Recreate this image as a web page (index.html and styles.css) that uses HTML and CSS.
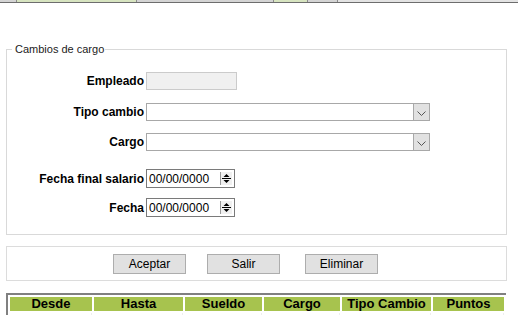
FILE: index.html
```html
<!DOCTYPE html>
<html lang="es">
<head>
    <meta charset="UTF-8">
    <title>Cambios de cargo</title>
    <link rel="stylesheet" href="styles.css">
</head>
<body>
    <div class="tabs">
        <span class="tab t1"></span>
        <span class="tab t2 on"></span>
        <span class="tab t3"></span>
        <span class="tab t4 on"></span>
        <span class="tab t5"></span>
        <span class="tab t6"></span>
    </div>

    <fieldset class="cambios">
        <legend>Cambios de cargo</legend>
        <div class="fila f-empleado">
            <label>Empleado</label>
            <div class="campo gris"></div>
        </div>
        <div class="fila f-tipo">
            <label>Tipo cambio</label>
            <div class="combo"><span class="flecha"><svg width="9" height="5" viewBox="0 0 9 5"><path d="M0.5 0.5 L4.5 4.5 L8.5 0.5" fill="none" stroke="#555" stroke-width="1"/></svg></span></div>
        </div>
        <div class="fila f-cargo">
            <label>Cargo</label>
            <div class="combo"><span class="flecha"><svg width="9" height="5" viewBox="0 0 9 5"><path d="M0.5 0.5 L4.5 4.5 L8.5 0.5" fill="none" stroke="#555" stroke-width="1"/></svg></span></div>
        </div>
        <div class="fila f-fecha1">
            <label>Fecha final salario</label>
            <div class="fecha">00/00/0000<span class="spin"><svg width="9" height="11" viewBox="0 0 9 11"><path d="M4.5 1 L7.5 4 L1.5 4 Z M1.5 7 L7.5 7 L4.5 10 Z" fill="#000"/><path d="M0 5.5 H9" stroke="#000" stroke-width="1"/></svg></span></div>
        </div>
        <div class="fila f-fecha2">
            <label>Fecha</label>
            <div class="fecha">00/00/0000<span class="spin"><svg width="9" height="11" viewBox="0 0 9 11"><path d="M4.5 1 L7.5 4 L1.5 4 Z M1.5 7 L7.5 7 L4.5 10 Z" fill="#000"/><path d="M0 5.5 H9" stroke="#000" stroke-width="1"/></svg></span></div>
        </div>
    </fieldset>

    <div class="botones">
        <button class="b-aceptar">Aceptar</button>
        <button class="b-salir">Salir</button>
        <button class="b-eliminar">Eliminar</button>
    </div>

    <table class="historial">
        <tr>
            <th class="c1">Desde</th>
            <th class="c2">Hasta</th>
            <th class="c3">Sueldo</th>
            <th class="c4">Cargo</th>
            <th class="c5">Tipo Cambio</th>
            <th class="c6 puntos">Puntos</th>
        </tr>
        <tr>
            <td></td><td></td><td></td><td></td><td></td><td></td>
        </tr>
    </table>
</body>
</html>
```

FILE: styles.css
```css
body {
    margin: 0;
    background-color: #fff;
    font-family: "Liberation Sans", Arial, sans-serif;
    font-size: 12px;
    color: #000;
}
.tabs {
    display: flex;
    height: 2px;
    border-bottom: 1px solid #6d6d6d;
}
.tab {
    height: 2px;
    background-color: #d4d4d4;
    border-right: 1px solid #8a8a8a;
}
.tab.on {
    background-color: #d7e4c0;
}
.t1 { width: 16px; }
.t2 { width: 119px; }
.t3 { width: 136px; }
.t4 { width: 33px; }
.t5 { width: 29px; }
.t6 { flex: 1; background-color: #e3e3e3; border-right: none; }

.cambios {
    margin: 40px 11px 0 6px;
    padding: 0 0 17px 0;
    border: 1px solid #d9d9d9;
    height: 192px;
    box-sizing: border-box;
}
.cambios legend {
    margin-left: 5px;
    padding: 0 1px 0 3px;
    font-size: 11px;
    color: #222;
}
.fila {
    display: flex;
    align-items: center;
}
.fila label {
    width: 137px;
    text-align: right;
    font-weight: bold;
    padding-right: 2px;
}
.f-empleado { margin-top: 17px; }
.f-tipo { margin-top: 13px; }
.f-cargo { margin-top: 12px; }
.f-fecha1 { margin-top: 18px; }
.f-fecha2 { margin-top: 10px; }

.campo {
    height: 17px;
    box-sizing: border-box;
}
.gris {
    width: 91px;
    height: 18px;
    background-color: #f0f0f0;
    border: 1px solid #cbcbcb;
}
.combo {
    width: 284px;
    height: 18px;
    box-sizing: border-box;
    border: 1px solid #a8a8a8;
    display: flex;
    justify-content: flex-end;
}
.flecha {
    width: 16px;
    height: 16px;
    box-sizing: border-box;
    background-color: #e1e1e1;
    border-left: 1px solid #a8a8a8;
    display: flex;
    align-items: center;
    justify-content: center;
    padding-top: 2px;
}
.fecha {
    width: 89px;
    height: 19px;
    box-sizing: border-box;
    border: 1px solid #7a7a7a;
    display: flex;
    align-items: center;
    padding-left: 2px;
    font-size: 12px;
}
.spin {
    margin-left: auto;
    margin-right: 2px;
    width: 11px;
    height: 13px;
    border-left: 1px solid #9a9a9a;
    background-color: #f0f0f0;
    display: flex;
    align-items: center;
    justify-content: center;
}

.botones {
    margin: 11px 11px 0 6px;
    height: 35px;
    box-sizing: border-box;
    border: 1px solid #dcdcdc;
    display: flex;
    align-items: center;
    padding-left: 106px;
}
button {
    width: 73px;
    height: 20px;
    font-family: "Liberation Sans", Arial, sans-serif;
    font-size: 12px;
    color: #000;
    background-color: #e1e1e1;
    border: 1px solid #adadad;
    border-radius: 0;
    padding: 0;
}
.b-salir { margin-left: 21px; }
.b-eliminar { margin-left: 25px; }

.historial {
    margin: 12px 0 0 6px;
    width: 500px;
    border-collapse: separate;
    border-spacing: 2px;
    border-top: 2px solid #808080;
    border-left: 2px solid #808080;
}
.historial th {
    background-color: #a7c34e;
    font-weight: bold;
    font-size: 13px;
    height: 14px;
    padding: 0;
    line-height: 14px;
}
.historial td {
    height: 12px;
    padding: 0;
    border-right: 1px solid #eee;
}
.c1 { width: 82px; }
.c2 { width: 89px; }
.c3 { width: 77px; }
.c4 { width: 76px; }
.c5 { width: 89px; }
.puntos {
    vertical-align: top;
    line-height: 11px;
}
```
